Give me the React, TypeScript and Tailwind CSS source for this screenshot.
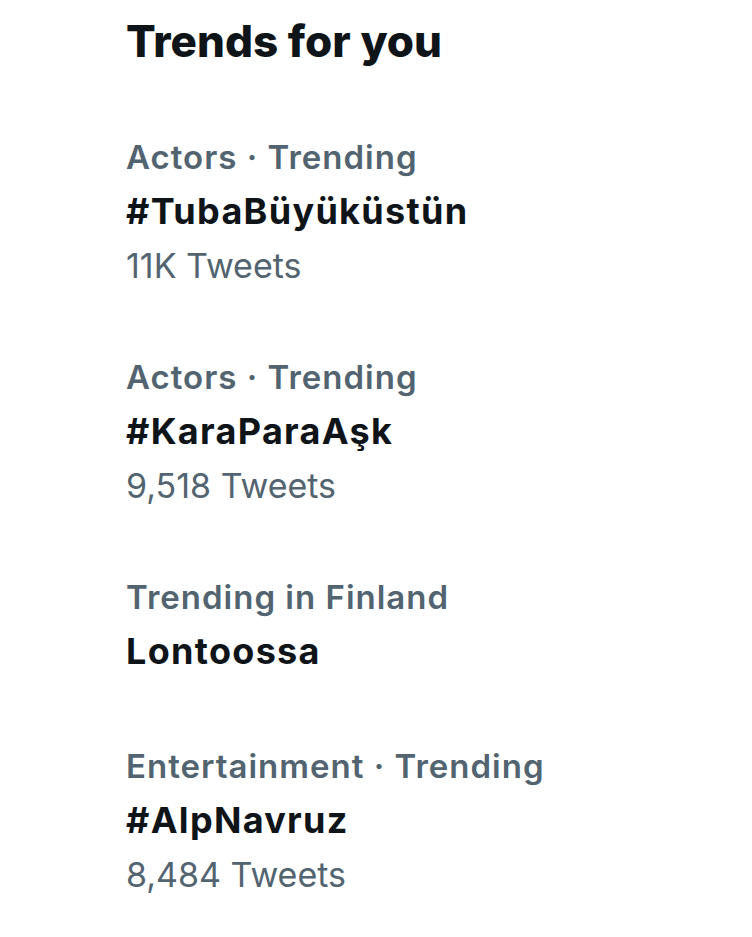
const trends = [
  { category: 'Actors · Trending', name: '#TubaBüyüküstün', count: '11K Tweets' },
  { category: 'Actors · Trending', name: '#KaraParaAşk', count: '9,518 Tweets' },
  { category: 'Trending in Finland', name: 'Lontoossa' },
  { category: 'Entertainment · Trending', name: '#AlpNavruz', count: '8,484 Tweets' },
]

export default function App() {
  return (
    <div className="min-h-[937px] w-[752px] bg-white pl-[126px] font-['Inter',sans-serif] antialiased">
      <h1 className="pt-[14px] text-[44px] leading-[54px] font-extrabold text-[#0f1419]">
        Trends for you
      </h1>
      <div className="mt-[63px] flex flex-col gap-[58px]">
        {trends.map((t) => (
          <div key={t.name} className={t.count ? 'flex flex-col' : 'flex flex-col pb-[3px]'}>
            <p className="text-[33px] leading-[53px] font-semibold tracking-[1px] text-[#536471]">{t.category}</p>
            <p className="text-[36px] leading-[55px] font-bold tracking-[1.3px] text-[#0f1419]">{t.name}</p>
            {t.count && <p className="text-[34px] leading-[54px] text-[#536471]">{t.count}</p>}
          </div>
        ))}
      </div>
    </div>
  )
}
